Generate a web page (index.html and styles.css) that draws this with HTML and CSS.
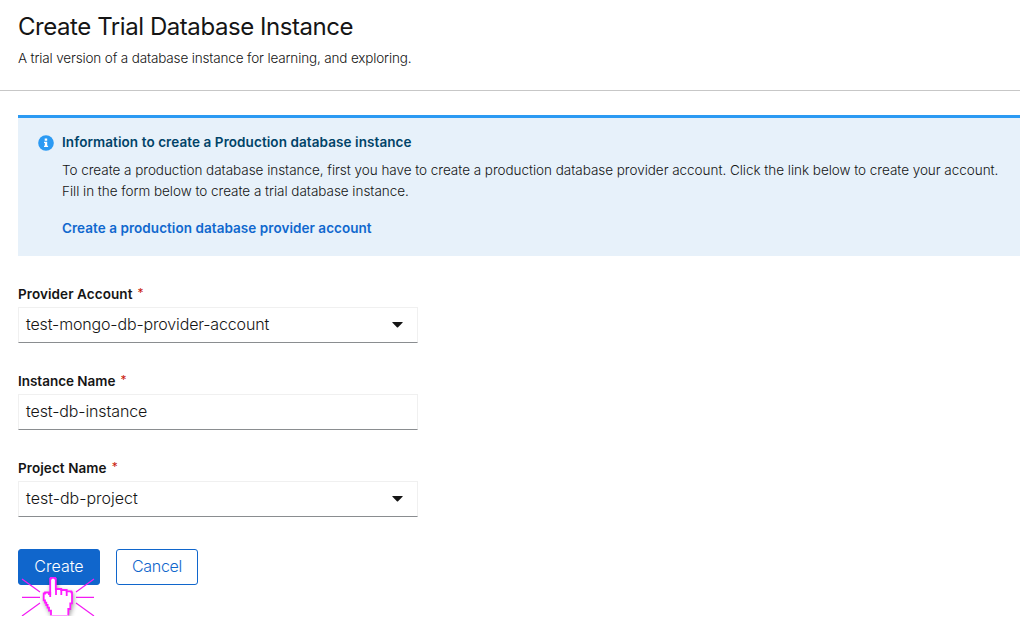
FILE: index.html
```html
<!DOCTYPE html>
<html lang="en">
<head>
<meta charset="utf-8">
<title>Create Trial Database Instance</title>
<link rel="stylesheet" href="styles.css">
</head>
<body>
<header class="page-header">
  <h1 class="page-title">Create Trial Database Instance</h1>
  <p class="page-subtitle">A trial version of a database instance for learning, and exploring.</p>
</header>
<main class="content">
  <section class="alert">
    <svg class="alert-icon" width="16" height="16" viewBox="0 0 16 16"><circle cx="8" cy="8" r="7.8" fill="#2b9af3"/><path fill="#fff" d="M6.7 3.5h2.5v2.3H6.7zM6 6.8h3.2v3.9h.9v1.3H6v-1.3h.8V8.1H6z"/></svg>
    <div class="alert-body">
      <h2 class="alert-title">Information to create a Production database instance</h2>
      <p class="alert-text"><span class="line-one">To create a production database instance, first you have to create a production database provider account. Click the link below to create your account.</span><br><span class="line-two">Fill in the form below to create a trial database instance.</span></p>
      <a class="alert-link">Create a production database provider account</a>
    </div>
  </section>
  <form class="form">
    <div class="field">
      <label class="label">Provider Account<span class="required">*</span></label>
      <div class="control"><span class="value-provider">test-mongo-db-provider-account</span><svg class="caret" width="11" height="6" viewBox="0 0 11 6"><path d="M.6 0h9.8q.6.2.1.8L6.1 5.3q-.6.5-1.2 0L.5.8Q0 .2.6 0z" fill="#151515"/></svg></div>
    </div>
    <div class="field">
      <label class="label label-instance">Instance Name<span class="required">*</span></label>
      <div class="control"><span class="value-instance">test-db-instance</span></div>
    </div>
    <div class="field">
      <label class="label">Project Name<span class="required">*</span></label>
      <div class="control"><span class="value-project">test-db-project</span><svg class="caret" width="11" height="6" viewBox="0 0 11 6"><path d="M.6 0h9.8q.6.2.1.8L6.1 5.3q-.6.5-1.2 0L.5.8Q0 .2.6 0z" fill="#151515"/></svg></div>
    </div>
    <div class="actions">
      <button type="button" class="button primary">Create</button>
      <button type="button" class="button secondary">Cancel</button>
    </div>
  </form>
</main>
<svg class="pointer" width="76" height="39" viewBox="0 0 76 39">
  <path d="M2 2l18 13M2 20.4h18M2 39l18-13M74 2L56 15M74 20.4H56M74 39L56 26" stroke="#f31bf3" stroke-width="1.2" fill="none"/>
  <path class="hand" fill="#fff" stroke="#ff1bff" stroke-width="1.8" d="M31 38.3v-4.6h-2v-3h-1.4V28h-1.3v-2.3H25v-2.4h-1.3v-6.8H25v-1h4v1.5h1.2V1.7h.8V.9h4v.8h.8V12h5.5v1h5.4v1.3h4.6v1h.7v11h-1.7V32h-2v6.3"/>
  <path stroke="#ff1bff" stroke-width="1.8" fill="none" d="M30.2 15v5M36 12v6M41.3 12v6M46.7 14v5"/>
  <path stroke="#ff9cff" stroke-width="1" d="M32 38.5h16"/>
</svg>
</body>
</html>
```
FILE: styles.css
```css
* { box-sizing: border-box; }
body { margin: 0; width: 1020px; height: 624px; overflow: hidden; background: #fff; color: #151515; font-family: Inter, "Open Sans", sans-serif; font-size: 13.5px; line-height: 21px; }
h1, h2, p { margin: 0; font-weight: 400; }
.page-header { height: 91px; padding: 11px 18px 0; border-bottom: 1px solid #c7c7c7; }
.page-title { font-size: 24px; line-height: 31px; letter-spacing: -.44px; }
.page-subtitle { margin-top: 6px; font-weight: 300; letter-spacing: -.15px; }
.content { padding: 24px 0 0 18px; }
.alert { display: flex; gap: 8px; height: 141px; padding: 16px 0 0 20px; border-top: 3px solid #2b9af3; background: #e7f1fa; }
.alert-icon { flex: none; margin-top: 1px; }
.alert-body { white-space: nowrap; margin-top: -2px; }
.alert-title { font-size: 13.5px; line-height: 21px; font-weight: 600; letter-spacing: .08px; color: #004368; }
.alert-text { margin-top: 7px; font-weight: 300; letter-spacing: -.035px; }
.alert-link { display: block; width: max-content; margin-top: 16px; font-weight: 600; letter-spacing: .05px; color: #1068ce; }
.form { margin-top: 28px; }
.field { width: 400px; margin-bottom: 28px; }
.label { display: flex; height: 23px; font-weight: 600; letter-spacing: .08px; }
.label-instance { letter-spacing: -.02px; }
.required { margin-left: 5px; margin-top: -2px; font-size: 12px; color: #c9190b; font-weight: 400; }
.control { display: flex; align-items: center; justify-content: space-between; height: 36px; padding: 0 14px 0 7px; border: 1px solid #f0f0f0; border-bottom-color: #8a8d90; font-size: 16px; line-height: 24px; font-weight: 300; }
.control span { margin-top: -2px; }
.value-provider { letter-spacing: -.15px; }
.value-instance { letter-spacing: -.12px; }
.actions { display: flex; gap: 16px; margin-top: 32px; }
.button { width: 82px; height: 36px; padding: 0 0 2px; border: 1px solid #1066cc; border-radius: 3px; font: 300 16px/24px Inter, "Open Sans", sans-serif; }
.primary { background: #1066cc; color: #fff; }
.secondary { background: #fff; color: #1066cc; letter-spacing: -.3px; }
.pointer { position: absolute; left: 20px; top: 577px; }
.hand { filter: drop-shadow(1px 2px 2px rgba(0, 0, 0, .35)); }
```
